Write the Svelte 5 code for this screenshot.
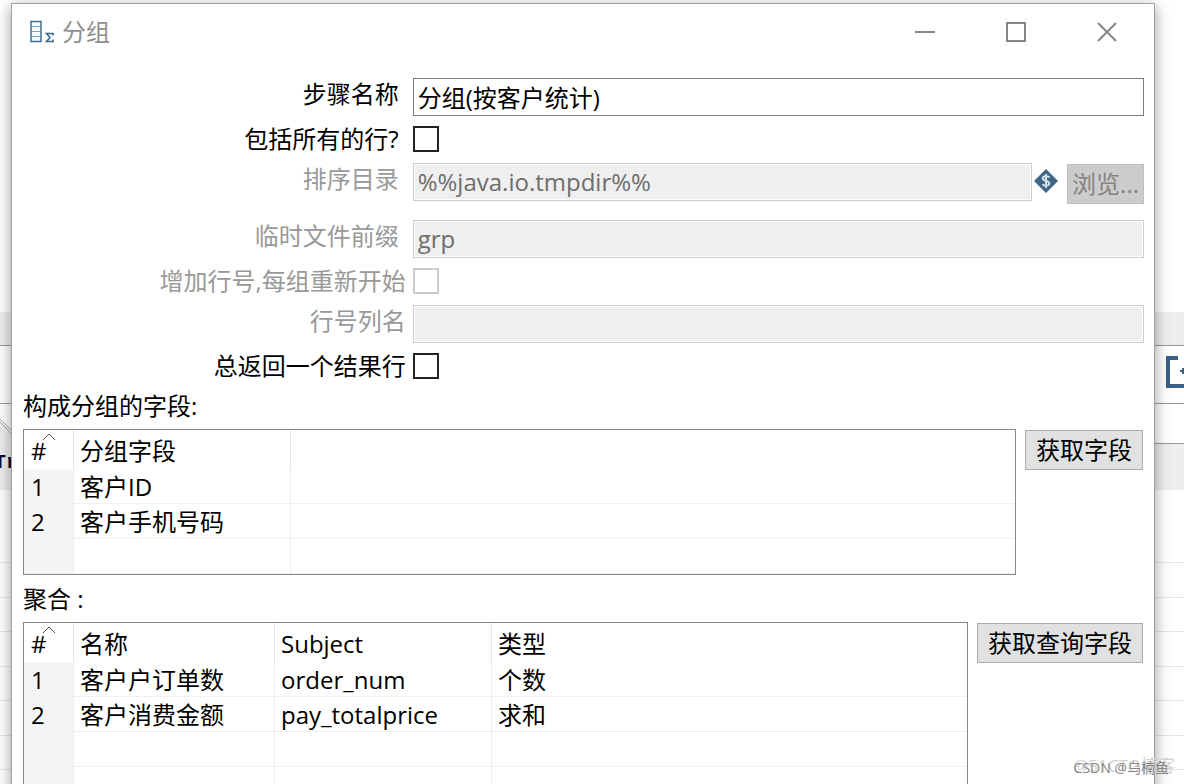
<script lang="ts">
	type Table = {
		title: string;
		action: string;
		columns: string[];
		rows: string[][];
		blank: number;
		kind: string;
	};

	let stepName = $state("分组(按客户统计)");
	let tmpDir = $state("%%java.io.tmpdir%%");
	let prefix = $state("grp");
	let lineField = $state("");
	let allRows = $state(false);
	let addLineNr = $state(false);
	let alwaysRow = $state(false);

	const tables: Table[] = [
		{
			title: "构成分组的字段:",
			action: "获取字段",
			columns: ["分组字段"],
			rows: [["客户ID"], ["客户手机号码"]],
			blank: 1,
			kind: "group"
		},
		{
			title: "聚合 :",
			action: "获取查询字段",
			columns: ["名称", "Subject", "类型"],
			rows: [
				["客户户订单数", "order_num", "个数"],
				["客户消费金额", "pay_totalprice", "求和"]
			],
			blank: 4,
			kind: "aggregate"
		}
	];
</script>

<div class="desktop">
	<!-- main application window, only visible at the edges of the dialog -->
	<div class="backdrop" aria-hidden="true">
		<div class="strip blank"></div>
		<div class="strip menu"></div>
		<div class="strip toolbar">
			<svg width="18" height="32" viewBox="0 0 18 32">
				<path d="M12 2H2V30H18" fill="none" stroke="#3a6186" stroke-width="4" />
				<path d="M14 15h4M17 12v6" stroke="#3a6186" stroke-width="2" />
			</svg>
		</div>
		<div class="strip tabs">
			<div class="tab-left">
				<svg width="12" height="34" viewBox="0 0 12 34">
					<path d="M0 0H12V29L0 17Z" fill="#fff" />
					<path d="M0 15L12 27M0 18L12 30" stroke="#a5a5a5" fill="none" />
				</svg>
				<b>Tr</b>
			</div>
			<div class="tab-right"></div>
		</div>
		<div class="sheet">
			{#each Array(10) as _}
				<div class="line"></div>
			{/each}
		</div>
	</div>

	<main class="dialog">
		<header class="titlebar">
			<svg class="app-icon" width="26" height="24" viewBox="0 0 26 24" aria-hidden="true">
				<path d="M2 1.5H12V21.5H2Z" fill="#f4f9fb" stroke="#44708f" stroke-width="1.500" />
				<path d="M3 6.5H11M3 11.5H11M3 16.5H11" stroke="#7fa0b6" />
				<path d="M24 15.500V13.500H17.500L21 17.500L17.500 21.500H24V19.500" fill="none" stroke="#3d6688" stroke-width="1.600" />
			</svg>
			<h1>分组</h1>
			<div class="window-buttons">
				<button aria-label="最小化">
					<svg width="22" height="22" viewBox="0 0 22 22"><path d="M1 11H21" /></svg>
				</button>
				<button aria-label="最大化">
					<svg width="22" height="22" viewBox="0 0 22 22"><path d="M2 2H20V20H2Z" /></svg>
				</button>
				<button aria-label="关闭">
					<svg width="22" height="22" viewBox="0 0 22 22"><path d="M2 2L20 20M20 2L2 20" /></svg>
				</button>
			</div>
		</header>

		<form class="form">
			<div class="row">
				<label for="step-name">步骤名称</label>
				<div class="field"><input id="step-name" type="text" bind:value={stepName} /></div>
			</div>
			<div class="row check">
				<label for="all-rows">包括所有的行?</label>
				<div class="field"><input id="all-rows" type="checkbox" bind:checked={allRows} /></div>
			</div>
			<div class="row disabled spaced">
				<label for="tmp-dir">排序目录</label>
				<div class="field">
					<input id="tmp-dir" type="text" bind:value={tmpDir} disabled />
					<svg class="variable" width="26" height="26" viewBox="0 0 26 26" aria-hidden="true">
						<path d="M13 1L25 13L13 25L1 13Z" fill="#3f6684" />
						<path
							d="M16.500 9.500C15.500 8 10 7.500 9.700 10.300C9.500 13 16.500 12.500 16.300 15.500C16 18.500 10.500 18 9.500 16.200M13 6V20"
							fill="none"
							stroke="#d3e2ec"
							stroke-width="2"
						/>
					</svg>
					<button class="push browse" type="button" disabled>浏览...</button>
				</div>
			</div>
			<div class="row disabled">
				<label for="prefix">临时文件前缀</label>
				<div class="field"><input id="prefix" type="text" bind:value={prefix} disabled /></div>
			</div>
			<div class="row check near disabled">
				<label for="add-line">增加行号,每组重新开始</label>
				<div class="field"><input id="add-line" type="checkbox" bind:checked={addLineNr} disabled /></div>
			</div>
			<div class="row near disabled">
				<label for="line-field">行号列名</label>
				<div class="field"><input id="line-field" type="text" bind:value={lineField} disabled /></div>
			</div>
			<div class="row check near">
				<label for="always-row">总返回一个结果行</label>
				<div class="field"><input id="always-row" type="checkbox" bind:checked={alwaysRow} /></div>
			</div>
		</form>

		{#each tables as table (table.kind)}
			<section class="block">
				<h2>{table.title}</h2>
				<div class="block-body">
					<div class="frame">
						<table class={table.kind}>
							<thead>
								<tr>
									<th class="num">
										#
										<svg class="sort" width="14" height="8" viewBox="0 0 14 8" aria-hidden="true">
											<path d="M1 7L7 1L13 7" fill="none" stroke="#555" />
										</svg>
									</th>
									{#each table.columns as column}
										<th class="col">{column}</th>
									{/each}
									{#if table.kind === "group"}<th></th>{/if}
								</tr>
							</thead>
							<tbody>
								{#each table.rows as row, i}
									<tr>
										<td class="num">{i + 1}</td>
										{#each row as cell}
											<td>{cell}</td>
										{/each}
										{#if table.kind === "group"}<td></td>{/if}
									</tr>
								{/each}
								{#each Array(table.blank) as _}
									<tr>
										<td class="num"></td>
										{#each table.columns as _column}
											<td></td>
										{/each}
										{#if table.kind === "group"}<td></td>{/if}
									</tr>
								{/each}
							</tbody>
						</table>
					</div>
					<button class="push" type="button">{table.action}</button>
				</div>
			</section>
		{/each}
	</main>

	<div class="watermark back">@51CTO博客</div>
	<div class="watermark">CSDN @乌楠鱼</div>
</div>

<style>
	:global(body) {
		background: #fff;
	}

	.desktop {
		position: relative;
		height: 100vh;
		overflow: hidden;
		box-sizing: border-box;
		padding: 3px 29px 0 11px;
		font-family: "Open Sans", "Noto Sans CJK SC", sans-serif;
		font-size: 24px;
		line-height: 32px;
		color: #000;
	}

	.desktop * {
		box-sizing: border-box;
	}

	.backdrop {
		position: absolute;
		inset: 0;
	}

	.blank {
		height: 312px;
	}

	.menu {
		height: 34px;
		background: #eee;
		border-bottom: 1px solid #999;
	}

	.toolbar {
		display: flex;
		align-items: center;
		justify-content: flex-end;
		height: 58px;
		padding-bottom: 6px;
		border-bottom: 1px solid #999;
	}

	.tabs {
		display: flex;
		height: 86px;
	}

	.tab-left {
		flex: 1;
		background: #eee;
		overflow: hidden;
	}

	.tab-left svg {
		display: block;
	}

	.tab-left b {
		display: block;
		margin-left: -6px;
		font-family: "Liberation Mono", monospace;
		font-size: 20px;
		line-height: 50px;
		color: #0c0c30;
	}

	.tab-right {
		flex: 1;
		background: #eee;
		border-top: 39px solid #fff;
		box-shadow: inset 0 1px #999;
	}

	.sheet {
		padding-top: 39px;
	}

	.line {
		height: 34px;
		border-bottom: 1px solid #e8e8e8;
	}

	.line:nth-child(even) {
		height: 35px;
	}

	.dialog {
		position: relative;
		min-height: 100%;
		background: #fff;
		border: 1px solid #a0a0a0;
		border-bottom: 0;
		box-shadow: 0 4px 14px rgba(0, 0, 0, 0.4);
	}

	.titlebar {
		display: flex;
		align-items: center;
		height: 56px;
		padding: 0 2px 0 17px;
		color: #8f8f8f;
	}

	h1,
	h2 {
		margin: 0;
		font-size: 24px;
		font-weight: 400;
	}

	h1 {
		padding-left: 7px;
	}

	.window-buttons {
		display: flex;
		margin-left: auto;
	}

	.window-buttons button {
		display: grid;
		place-items: center;
		width: 91px;
		height: 56px;
		padding: 0 0 1px;
		border: 0;
		background: none;
	}

	.window-buttons path {
		fill: none;
		stroke: #868686;
		stroke-width: 2;
	}

	.form {
		padding-top: 18px;
	}

	.row {
		display: grid;
		grid-template-columns: 35% minmax(0, 1fr);
		align-items: start;
		height: 38px;
	}

	.row.check {
		align-items: center;
		height: 47px;
		padding-bottom: 2px;
	}

	.row.spaced {
		height: 57px;
	}

	.row label {
		padding-right: 13px;
		text-align: right;
		white-space: nowrap;
	}

	.row.near label {
		padding-right: 6px;
	}

	.row.disabled label {
		color: #999;
	}

	.field {
		display: flex;
		align-items: flex-start;
		padding: 0 10px 0 1px;
	}

	input {
		margin: 0;
		font: inherit;
		color: inherit;
		background: #fff;
	}

	input[type="text"] {
		flex: 1;
		min-width: 0;
		height: 38px;
		padding: 0 4px 2px;
		border: 1px solid #7a7a7a;
		border-radius: 0;
	}

	input[type="text"]:disabled {
		color: #6d6d6d;
		background: #efefef;
		border-color: #ccc;
		box-shadow: inset 0 0 0 1px #fff;
	}

	input[type="checkbox"] {
		appearance: none;
		width: 26px;
		height: 26px;
		border: 2px solid #222;
	}

	input[type="checkbox"]:checked {
		box-shadow: inset 0 0 0 4px #fff;
		background: #222;
	}

	input[type="checkbox"]:disabled {
		border-color: #ccc;
	}

	.variable {
		flex: none;
		margin: 5px 8px 0 1px;
	}

	.push {
		flex: none;
		height: 40px;
		margin-top: 1px;
		padding: 0 10px;
		border: 1px solid #adadad;
		background: #e1e1e1;
		font: inherit;
		color: #000;
	}

	.push.browse {
		padding: 0 4px;
		border-color: #bfbfbf;
		background: #ccc;
		color: #838383;
	}

	.block {
		padding: 0 11px 8px;
	}

	h2 {
		margin-bottom: 7px;
	}

	.block-body {
		display: flex;
		align-items: flex-start;
		gap: 9px;
	}

	.frame {
		flex: 1;
		min-width: 0;
		border: 1px solid #828790;
	}

	table {
		width: 100%;
		table-layout: fixed;
		border-collapse: separate;
		border-spacing: 0;
	}

	th,
	td {
		height: 35px;
		padding: 2px 0 0 6px;
		border-right: 1px solid #e6eef6;
		border-bottom: 1px solid #f0f0f0;
		font-weight: 400;
		text-align: left;
		white-space: nowrap;
	}

	th {
		height: 39px;
		border-color: #e5e5e5;
		border-bottom: 0;
	}

	th:last-child,
	td:last-child {
		border-right: 0;
	}

	.num {
		position: relative;
		width: 50px;
		padding-left: 7px;
	}

	td.num {
		background: #f5f5f5;
	}

	.sort {
		position: absolute;
		top: 3px;
		left: 18px;
	}

	.group .col {
		width: 217px;
	}

	.aggregate .col:nth-child(2) {
		width: 201px;
	}

	.aggregate .col:nth-child(3) {
		width: 217px;
	}

	.watermark {
		position: absolute;
		right: 15px;
		bottom: 6px;
		font-size: 14px;
		line-height: 20px;
		color: #858585;
	}

	.watermark.back {
		right: 9px;
		bottom: 8px;
		font-size: 17px;
		color: #d2d2d2;
	}
</style>
